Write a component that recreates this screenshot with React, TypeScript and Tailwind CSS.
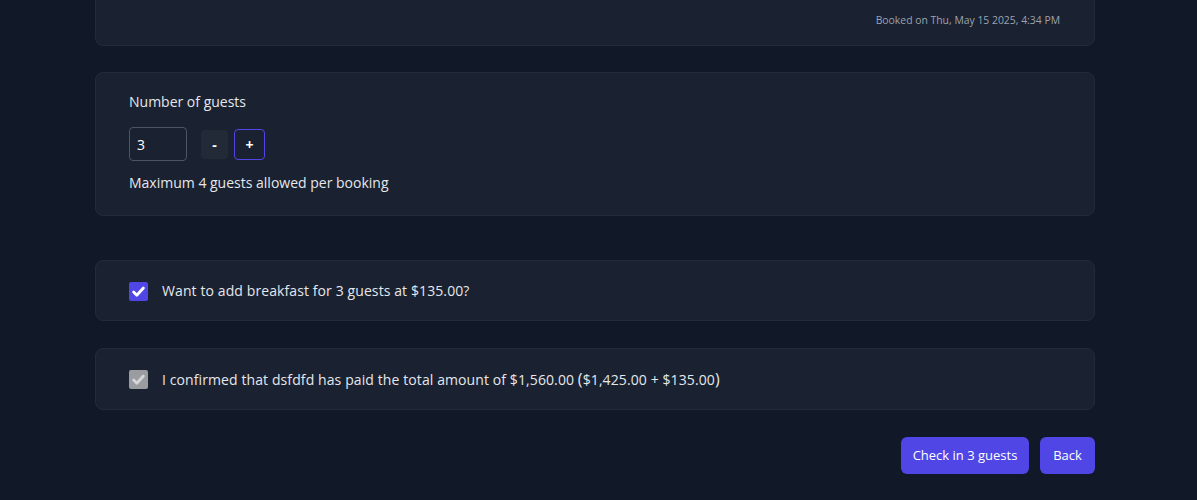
import React from "react";

const font = { fontFamily: '"Open Sans", "Noto Sans", sans-serif' };

function Check({ disabled }: { disabled?: boolean }) {
  return (
    <span
      className={`flex h-[19px] w-[19px] shrink-0 items-center justify-center rounded-[2px] ${
        disabled ? "bg-[#9a9ca0]" : "bg-[#4f46e5]"
      }`}
    >
      <svg width="15" height="15" viewBox="0 0 16 16" fill="none">
        <path
          d="M2.8 8.6l3.4 3.4L13.2 4.2"
          stroke={disabled ? "#d4d5d7" : "#ffffff"}
          strokeWidth="3"
          strokeLinecap="round"
          strokeLinejoin="round"
        />
      </svg>
    </span>
  );
}

export default function App() {
  return (
    <div className="min-h-[500px] w-full overflow-hidden bg-[#111827] text-[#e5e7eb]" style={font}>
      <div className="ml-[95px] flex w-[1000px] flex-col">
        <div className="mt-[-20px] flex h-[66px] items-end justify-end rounded-lg border border-[#232b3a] bg-[#1a2130] px-[34px] pb-[16px]">
          <span className="text-[10.4px] text-[#9ca3af]">Booked on Thu, May 15 2025, 4:34 PM</span>
        </div>

        <div className="mt-[26px] flex flex-col rounded-lg border border-[#232b3a] bg-[#1a2130] px-[33px] pb-[22px] pt-[19px]">
          <span className="text-[14px] leading-[20px]">Number of guests</span>
          <div className="mt-[15px] flex items-center">
            <div className="flex h-[34px] w-[58px] items-center rounded border border-[#4b5563] px-[7px] text-[14px] text-white">
              3
            </div>
            <button className="ml-[14px] flex h-[29px] w-[27px] items-center justify-center rounded bg-[#222a38] text-[14px] font-bold text-white">
              -
            </button>
            <button className="ml-[6px] flex h-[31px] w-[31px] items-center justify-center rounded border border-[#4f46e5] text-[14px] font-bold text-white">
              +
            </button>
          </div>
          <span className="mt-[12px] text-[14px] leading-[20px]">Maximum 4 guests allowed per booking</span>
        </div>

        <div className="mt-[44px] flex items-center gap-[14px] rounded-lg border border-[#232b3a] bg-[#1a2130] px-[33px] pb-[19px] pt-[20px]">
          <Check />
          <span className="text-[14px] leading-[20px] tracking-[0.1px]">Want to add breakfast for 3 guests at $135.00?</span>
        </div>

        <div className="mt-[27px] flex items-center gap-[14px] rounded-lg border border-[#232b3a] bg-[#1a2130] px-[33px] pb-[19px] pt-[20px]">
          <Check disabled />
          <span className="text-[14px] leading-[20px] tracking-[0.1px]">
            I confirmed that dsfdfd has paid the total amount of $1,560.00{" "}
            <span className="text-[16px]">(</span>$1,425.00 + $135.00<span className="text-[16px]">)</span>
          </span>
        </div>

        <div className="mt-[27px] flex justify-end gap-[11px]">
          <button className="h-[37px] w-[128px] rounded-md bg-[#4f46e5] text-[13px] text-white">Check in 3 guests</button>
          <button className="h-[37px] w-[55px] rounded-md bg-[#4f46e5] text-[13px] text-white">Back</button>
        </div>
      </div>
    </div>
  );
}
